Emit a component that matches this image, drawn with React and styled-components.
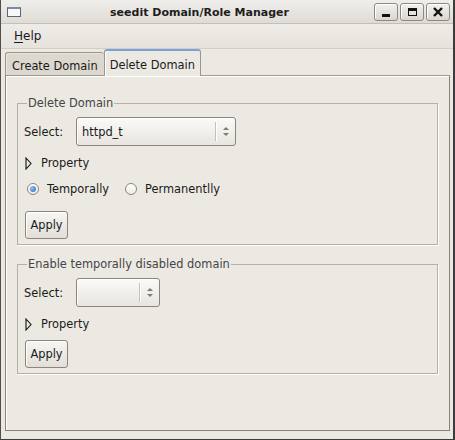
import React from "react";
import styled, { createGlobalStyle } from "styled-components";

const GlobalStyle = createGlobalStyle`
  html, body {
    margin: 0;
    padding: 0;
    background: #ece9e3;
  }
  body {
    font-family: "DejaVu Sans", "Bitstream Vera Sans", sans-serif;
    font-size: 11.4px;
    color: #1a1a1a;
  }
`;

const App = () => {
  return (
    <>
      <GlobalStyle />
      <Window>
        <TitleBar>
          <AppIcon />
          <Title>seedit Domain/Role Manager</Title>
          <WinButtons>
            <WinButton>
              <MinGlyph />
            </WinButton>
            <WinButton>
              <MaxGlyph />
            </WinButton>
            <WinButton>
              <svg width="10" height="10" viewBox="0 0 10 10">
                <path d="M1 1 L9 9 M9 1 L1 9" stroke="#111" strokeWidth="2.4" />
              </svg>
            </WinButton>
          </WinButtons>
        </TitleBar>
        <MenuBar>
          <MenuItem>
            <u>H</u>elp
          </MenuItem>
        </MenuBar>
        <Tabs>
          <Tab>Create Domain</Tab>
          <Tab $active>Delete Domain</Tab>
        </Tabs>
        <Page>
          <Frame>
            <Legend>Delete Domain</Legend>
            <SelectRow>
              <FieldLabel>Select:</FieldLabel>
              <Combo $w={160}>
                <ComboText>httpd_t</ComboText>
                <ComboSep />
                <Spin>
                  <ArrowUp />
                  <ArrowDown />
                </Spin>
              </Combo>
            </SelectRow>
            <Expander>
              <ExpanderArrow />
              Property
            </Expander>
            <RadioRow>
              <RadioItem>
                <Radio $checked />
                Temporally
              </RadioItem>
              <RadioItem>
                <Radio />
                Permanentlly
              </RadioItem>
            </RadioRow>
            <ApplyButton $mt={12}>Apply</ApplyButton>
          </Frame>
          <Frame>
            <Legend>Enable temporally disabled domain</Legend>
            <SelectRow>
              <FieldLabel>Select:</FieldLabel>
              <Combo $w={84}>
                <ComboText />
                <ComboSep />
                <Spin>
                  <ArrowUp />
                  <ArrowDown />
                </Spin>
              </Combo>
            </SelectRow>
            <Expander>
              <ExpanderArrow />
              Property
            </Expander>
            <ApplyButton $mt={6}>Apply</ApplyButton>
          </Frame>
        </Page>
      </Window>
    </>
  );
};

const ExpanderArrow = () => (
  <svg width="7" height="13" viewBox="0 0 7 13">
    <path d="M1 1 L6 6.5 L1 12 Z" fill="none" stroke="#111" strokeWidth="1.1" />
  </svg>
);

export default App;

const Window = styled.div`
  width: 455px;
  height: 440px;
  box-sizing: border-box;
  display: flex;
  flex-direction: column;
  background: #ece9e3;
  border-left: 1px solid #4f4f4f;
  border-right: 2px solid #3c3c3c;
  border-bottom: 1px solid #3c3c3c;
  overflow: hidden;
`;

const TitleBar = styled.div`
  height: 24px;
  box-sizing: border-box;
  display: flex;
  align-items: center;
  padding: 0 3px 0 6px;
  background: linear-gradient(#f0eeeb, #dfdcd6);
  border-bottom: 1px solid #c4c0b9;
`;

const AppIcon = styled.span`
  width: 14px;
  height: 10px;
  box-sizing: border-box;
  border: 1px solid #5d6470;
  border-top: 2px solid #7d8aa2;
  background: #f6f7f9;
  margin-top: 1px;
`;

const Title = styled.div`
  flex: 1;
  text-align: center;
  font-weight: bold;
  font-size: 11px;
  color: #1e1e1e;
  padding: 1px 0 0 4px;
`;

const WinButtons = styled.div`
  display: flex;
  gap: 2px;
`;

const WinButton = styled.span`
  width: 24px;
  height: 18px;
  box-sizing: border-box;
  display: flex;
  align-items: center;
  justify-content: center;
  border: 1px solid #8e897f;
  border-radius: 3px;
  background: linear-gradient(#f3f1ee, #dad6cf);
  box-shadow: inset 1px 1px 0 #fff;
`;

const MinGlyph = styled.span`
  width: 8px;
  height: 3px;
  background: #111;
  margin-top: 7px;
`;

const MaxGlyph = styled.span`
  width: 9px;
  height: 8px;
  box-sizing: border-box;
  border: 1.5px solid #111;
  border-top-width: 3px;
`;

const MenuBar = styled.div`
  height: 25px;
  box-sizing: border-box;
  display: flex;
  align-items: center;
  padding-left: 13px;
  background: linear-gradient(#efece8, #e6e3dd);
  border-bottom: 1px solid #d3cfc8;
`;

const MenuItem = styled.span`
  font-size: 12px;
  u {
    text-decoration-thickness: 1px;
    text-underline-offset: 2px;
  }
`;

const Tabs = styled.div`
  display: flex;
  align-items: flex-end;
  padding-left: 4px;
  margin-bottom: -1px;
  position: relative;
  z-index: 1;
`;

const Tab = styled.div`
  box-sizing: border-box;
  height: ${(p) => (p.$active ? 27 : 24)}px;
  padding: ${(p) => (p.$active ? "2px 5px 0 5px" : "3px 6px 0 6px")};
  display: flex;
  align-items: center;
  border: 1px solid #9b958a;
  border-bottom: ${(p) => (p.$active ? "none" : "1px solid #9b958a")};
  border-top: ${(p) => (p.$active ? "2px solid #7aa2d6" : "1px solid #9b958a")};
  border-radius: 3px 3px 0 0;
  background: ${(p) => (p.$active ? "#ece9e3" : "#dcd7cf")};
  box-shadow: ${(p) => (p.$active ? "inset 1px 0 0 #fff" : "inset 1px 1px 0 #e9e5df")};
  ${(p) => (p.$active ? "" : "border-right: none;")}
`;

const Page = styled.div`
  flex: 1;
  margin: 0 3px 8px 4px;
  box-sizing: border-box;
  border: 1px solid #8a8477;
  border-top-color: #a39e95;
  padding: 20px 11px 0 11px;
  box-shadow: inset 1px 1px 0 #fff;
`;

const Frame = styled.fieldset`
  margin: 0;
  padding: 6px 5px 5px 6px;
  min-width: 0;
  border: 1px solid #b6b1a8;
  box-shadow: 1px 1px 0 #fff;
  & + & {
    margin-top: 12px;
  }
`;

const Legend = styled.legend`
  padding: 0 1px;
  margin-left: 3px;
  line-height: 15px;
  color: #454545;
`;

const SelectRow = styled.div`
  display: flex;
  align-items: center;
`;

const FieldLabel = styled.span`
  width: 52px;
`;

const Combo = styled.div`
  width: ${(p) => p.$w}px;
  height: 29px;
  box-sizing: border-box;
  display: flex;
  align-items: center;
  border: 1px solid #8b857b;
  border-radius: 3px;
  background: linear-gradient(#fbfaf8, #e8e5e0);
  box-shadow: inset 1px 1px 0 #fff;
`;

const ComboText = styled.span`
  flex: 1;
  padding-left: 5px;
`;

const ComboSep = styled.span`
  width: 1px;
  height: 19px;
  background: #c6c1b8;
  box-shadow: 1px 0 0 #fff;
`;

const Spin = styled.span`
  width: 19px;
  display: flex;
  flex-direction: column;
  align-items: center;
  gap: 3px;
`;

const ArrowUp = styled.span`
  width: 0;
  height: 0;
  border-left: 3px solid transparent;
  border-right: 3px solid transparent;
  border-bottom: 3px solid #7f7a72;
`;

const ArrowDown = styled.span`
  width: 0;
  height: 0;
  border-left: 3px solid transparent;
  border-right: 3px solid transparent;
  border-top: 3px solid #7f7a72;
`;

const Expander = styled.div`
  display: flex;
  align-items: center;
  gap: 9px;
  height: 20px;
  margin-top: 7px;
  padding-left: 1px;
`;

const RadioRow = styled.div`
  display: flex;
  align-items: center;
  gap: 16px;
  height: 20px;
  margin-top: 6px;
  padding-left: 3px;
`;

const RadioItem = styled.span`
  display: flex;
  align-items: center;
  gap: 8px;
`;

const Radio = styled.span`
  width: 12px;
  height: 12px;
  box-sizing: border-box;
  border-radius: 50%;
  border: 1px solid #8b857b;
  background: linear-gradient(#ffffff, #eeebe6);
  display: flex;
  align-items: center;
  justify-content: center;
  &::after {
    content: "";
    display: ${(p) => (p.$checked ? "block" : "none")};
    width: 6px;
    height: 6px;
    border-radius: 50%;
    background: radial-gradient(circle at 35% 35%, #9cc3ee, #3f7fcc 70%);
  }
`;

const ApplyButton = styled.button`
  display: block;
  margin: ${(p) => p.$mt}px 0 0 1px;
  width: 43px;
  height: 28px;
  padding: 0;
  font: inherit;
  color: #1a1a1a;
  border: 1px solid #8b857b;
  border-radius: 3px;
  background: linear-gradient(#f7f6f3, #e2ded8);
  box-shadow: inset 1px 1px 0 #fff;
`;
